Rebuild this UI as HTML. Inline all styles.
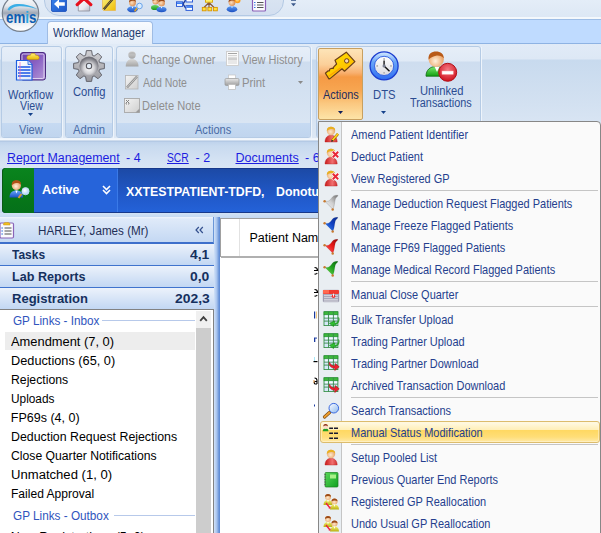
<!DOCTYPE html>
<html><head><meta charset="utf-8">
<style>
*{margin:0;padding:0;box-sizing:border-box}
html,body{width:601px;height:533px;overflow:hidden;background:#c8daef;font-family:"Liberation Sans",sans-serif;position:relative}
.a{position:absolute}
.t{position:absolute;white-space:nowrap;line-height:1}
svg{position:absolute;overflow:visible}
</style></head><body>

<div class="a" style="left:0px;top:0px;width:601px;height:19px;background:linear-gradient(#e4edf8,#dce7f4)"></div>
<div class="a" style="left:44px;top:-14px;width:240px;height:30px;border:1px solid #b3c9e4;border-radius:0 0 15px 15px;background:linear-gradient(#dde7f3,#d3dff0)"></div>
<div class="a" style="left:0px;top:19px;width:601px;height:25px;background:#bfdbff;border-top:1px solid #9dbde6;border-bottom:1px solid #8eb3e3"></div>
<div class="a" style="left:0px;top:17px;width:601px;height:2px;background:#f4f8fc"></div>
<div class="a" style="left:47px;top:21px;width:106px;height:24px;border:1px solid #9fbce4;border-bottom:none;border-radius:4px 4px 0 0;background:linear-gradient(#f9fbfe,#e4edf8)"></div>
<div class="t" style="left:53px;top:26.64px;font-size:12px;color:#1c3a6e;font-weight:400;transform:scaleX(0.92);transform-origin:0 0;">Workflow Manager</div>
<div class="a" style="left:0px;top:44px;width:601px;height:96px;background:linear-gradient(#e1ebf7 0,#dde8f5 15px,#c8daee 16px,#d3e1f1 60px,#dde8f5 95px)"></div>
<div class="a" style="left:62px;top:47px;width:1px;height:91px;background:#eef4fb"></div>
<div class="a" style="left:1px;top:46px;width:61px;height:92px;border:1px solid #b5cbe5;border-radius:3px;background:linear-gradient(#e6eef8 0,#e0eaf6 14px,#ceddef 15px,#d6e3f2 60px,#dce7f4 100%)"></div>
<div class="a" style="left:2px;top:123px;width:59px;height:14px;background:linear-gradient(#c6daf2,#c0d5ee);border-radius:0 0 2px 2px"></div>
<div class="a" style="left:113px;top:47px;width:1px;height:91px;background:#eef4fb"></div>
<div class="a" style="left:65px;top:46px;width:48px;height:92px;border:1px solid #b5cbe5;border-radius:3px;background:linear-gradient(#e6eef8 0,#e0eaf6 14px,#ceddef 15px,#d6e3f2 60px,#dce7f4 100%)"></div>
<div class="a" style="left:66px;top:123px;width:46px;height:14px;background:linear-gradient(#c6daf2,#c0d5ee);border-radius:0 0 2px 2px"></div>
<div class="a" style="left:311px;top:47px;width:1px;height:91px;background:#eef4fb"></div>
<div class="a" style="left:116px;top:46px;width:195px;height:92px;border:1px solid #b5cbe5;border-radius:3px;background:linear-gradient(#e6eef8 0,#e0eaf6 14px,#ceddef 15px,#d6e3f2 60px,#dce7f4 100%)"></div>
<div class="a" style="left:117px;top:123px;width:193px;height:14px;background:linear-gradient(#c6daf2,#c0d5ee);border-radius:0 0 2px 2px"></div>
<div class="a" style="left:481px;top:47px;width:1px;height:91px;background:#eef4fb"></div>
<div class="a" style="left:316px;top:46px;width:165px;height:92px;border:1px solid #b5cbe5;border-radius:3px;background:linear-gradient(#e6eef8 0,#e0eaf6 14px,#ceddef 15px,#d6e3f2 60px,#dce7f4 100%)"></div>
<div class="a" style="left:317px;top:123px;width:163px;height:14px;background:linear-gradient(#c6daf2,#c0d5ee);border-radius:0 0 2px 2px"></div>
<div class="t" style="left:19px;top:124.34px;font-size:12px;color:#4a6ca6;font-weight:400;transform:scaleX(0.92);transform-origin:0 0;">View</div>
<div class="t" style="left:73px;top:124.34px;font-size:12px;color:#4a6ca6;font-weight:400;transform:scaleX(0.94);transform-origin:0 0;">Admin</div>
<div class="t" style="left:195px;top:124.34px;font-size:12px;color:#4a6ca6;font-weight:400;transform:scaleX(0.92);transform-origin:0 0;">Actions</div>
<div class="t" style="left:8px;top:88.54px;font-size:12px;color:#2b4c91;font-weight:400;transform:scaleX(0.918);transform-origin:0 0;">Workflow</div>
<div class="t" style="left:20px;top:99.84px;font-size:12px;color:#2b4c91;font-weight:400;transform:scaleX(0.885);transform-origin:0 0;">View</div>
<svg style="left:28px;top:113px" width="6" height="3"><path d="M0 0H5L2.5 3Z" fill="#15428b"/></svg>
<div class="t" style="left:73.3px;top:85.84px;font-size:12px;color:#2b4c91;font-weight:400;transform:scaleX(0.933);transform-origin:0 0;">Config</div>
<div class="t" style="left:142px;top:54.14px;font-size:12px;color:#8f8f8f;font-weight:400;transform:scaleX(0.909);transform-origin:0 0;">Change Owner</div>
<div class="t" style="left:142.5px;top:77.14px;font-size:12px;color:#8f8f8f;font-weight:400;transform:scaleX(0.878);transform-origin:0 0;">Add Note</div>
<div class="t" style="left:142px;top:99.84px;font-size:12px;color:#8f8f8f;font-weight:400;transform:scaleX(0.924);transform-origin:0 0;">Delete Note</div>
<div class="t" style="left:242px;top:54.14px;font-size:12px;color:#8f8f8f;font-weight:400;transform:scaleX(0.912);transform-origin:0 0;">View History</div>
<div class="t" style="left:241.5px;top:77.14px;font-size:12px;color:#8f8f8f;font-weight:400;transform:scaleX(0.942);transform-origin:0 0;">Print</div>
<svg style="left:298px;top:81px" width="6" height="3"><path d="M0 0H5L2.5 3Z" fill="#8a8a8a"/></svg>
<div class="a" style="left:318px;top:48px;width:45px;height:72px;border:1px solid #c8a060;border-radius:2px;background:linear-gradient(#fde4b8 0,#fbd09a 22%,#f8b070 34%,#f59a45 40%,#f7a550 58%,#fbc880 78%,#fde4a8 100%)"></div>
<div class="t" style="left:323px;top:88.84px;font-size:12px;color:#1e2c5e;font-weight:400;transform:scaleX(0.908);transform-origin:0 0;">Actions</div>
<svg style="left:338px;top:111px" width="6" height="3"><path d="M0 0H5L2.5 3Z" fill="#0f1f5a"/></svg>
<div class="t" style="left:372.5px;top:88.84px;font-size:12px;color:#2b4c91;font-weight:400;transform:scaleX(0.939);transform-origin:0 0;">DTS</div>
<svg style="left:381px;top:111px" width="6" height="3"><path d="M0 0H5L2.5 3Z" fill="#15428b"/></svg>
<div class="t" style="left:420.3px;top:84.84px;font-size:12px;color:#2b4c91;font-weight:400;transform:scaleX(0.931);transform-origin:0 0;">Unlinked</div>
<div class="t" style="left:410px;top:97.04px;font-size:12px;color:#2b4c91;font-weight:400;transform:scaleX(0.904);transform-origin:0 0;">Transactions</div>
<div class="a" style="left:0px;top:138px;width:601px;height:30px;background:linear-gradient(#eef4fb 0,#f4f8fc 2px,#a9c0de 3px,#bfd3ec 4px,#c8daef 8px,#d4e2f3 22px,#d8e5f4 100%)"></div>
<div class="t" style="left:6.5px;top:152.02px;font-size:12.5px;color:#1c1ce0;font-weight:400;transform:scaleX(0.988);transform-origin:0 0;text-decoration:underline">Report Management</div>
<div class="t" style="left:126px;top:152.02px;font-size:12.5px;color:#1c1ce0;font-weight:400;">- 4</div>
<div class="t" style="left:167px;top:152.02px;font-size:12.5px;color:#1c1ce0;font-weight:400;transform:scaleX(0.824);transform-origin:0 0;text-decoration:underline">SCR</div>
<div class="t" style="left:195.5px;top:152.02px;font-size:12.5px;color:#1c1ce0;font-weight:400;">- 2</div>
<div class="t" style="left:235.5px;top:152.02px;font-size:12.5px;color:#1c1ce0;font-weight:400;text-decoration:underline">Documents</div>
<div class="t" style="left:305px;top:152.02px;font-size:12.5px;color:#1c1ce0;font-weight:400;">- 6</div>
<div class="a" style="left:2px;top:168px;width:599px;height:45px;background:#2664da;border-top:1px solid #1f4fb0;border-bottom:1px solid #17388a;border-radius:4px 0 0 4px"></div>
<div class="a" style="left:2px;top:168px;width:32px;height:45px;background:linear-gradient(#0a841e,#077a18 50%,#05701a);border-radius:4px 0 0 4px;box-shadow:inset 1px 0 0 #0a5a14"></div>
<div class="a" style="left:117px;top:169px;width:1px;height:43px;background:#3a7ae8"></div>
<div class="a" style="left:118px;top:168px;width:483px;height:45px;background:linear-gradient(#1c4aa6,#2058c8 60%,#2462d8);border-top:1px solid #17388a;border-bottom:1px solid #17388a"></div>
<div class="t" style="left:42px;top:183.72px;font-size:12.5px;color:#fff;font-weight:700;">Active</div>
<div class="t" style="left:125.5px;top:185.82px;font-size:12.5px;color:#fff;font-weight:700;transform:scaleX(0.986);transform-origin:0 0;">XXTESTPATIENT-TDFD,</div>
<div class="t" style="left:275.5px;top:185.82px;font-size:12.5px;color:#fff;font-weight:700;transform:scaleX(0.986);transform-origin:0 0;">Donotu</div>
<svg style="left:102px;top:185px" width="10" height="10"><path d="M1 1L4.5 4.5L8 1M1 5L4.5 8.5L8 5" stroke="#fff" stroke-width="1.6" fill="none"/></svg>
<div class="a" style="left:0px;top:213px;width:601px;height:320px;background:#c5d9f2"></div>
<div class="a" style="left:0px;top:213px;width:601px;height:4px;background:linear-gradient(#d2e2f5,#c6daf2)"></div>
<div class="a" style="left:0px;top:217px;width:214px;height:27px;background:linear-gradient(#f0f5fc 0,#dfeaf9 2px,#c4d8f3 100%);border-bottom:2px solid #3d6fcb;border-right:1px solid #6a96d8"></div>
<div class="t" style="left:38px;top:224.72px;font-size:12.5px;color:#1f2f57;font-weight:400;transform:scaleX(0.932);transform-origin:0 0;">HARLEY, James (Mr)</div>
<svg style="left:195px;top:226px" width="9" height="8"><path d="M3.8 1L1 4L3.8 7M7.8 1L5 4L7.8 7" stroke="#34508e" stroke-width="1.2" fill="none"/></svg>
<div class="a" style="left:0px;top:244px;width:214px;height:22px;background:linear-gradient(#ecf2fb,#c2d7f3);border-bottom:1px solid #3f73cd"></div>
<div class="t" style="left:12.2px;top:248.72px;font-size:12.5px;color:#15305e;font-weight:700;transform:scaleX(0.959);transform-origin:0 0;">Tasks</div>
<div class="t" style="left:190.3px;top:248.72px;font-size:12.5px;color:#15305e;font-weight:700;transform:scaleX(1.11);transform-origin:0 0;">4,1</div>
<div class="a" style="left:0px;top:266px;width:214px;height:22px;background:linear-gradient(#ecf2fb,#c2d7f3);border-bottom:1px solid #3f73cd"></div>
<div class="t" style="left:12.2px;top:270.72px;font-size:12.5px;color:#15305e;font-weight:700;transform:scaleX(1.008);transform-origin:0 0;">Lab Reports</div>
<div class="t" style="left:190.3px;top:270.72px;font-size:12.5px;color:#15305e;font-weight:700;transform:scaleX(1.11);transform-origin:0 0;">0,0</div>
<div class="a" style="left:0px;top:288px;width:214px;height:22px;background:linear-gradient(#ecf2fb,#c2d7f3);border-bottom:1px solid #3f73cd"></div>
<div class="t" style="left:12.2px;top:292.72px;font-size:12.5px;color:#15305e;font-weight:700;transform:scaleX(1.042);transform-origin:0 0;">Registration</div>
<div class="t" style="left:174.7px;top:292.72px;font-size:12.5px;color:#15305e;font-weight:700;transform:scaleX(1.11);transform-origin:0 0;">202,3</div>
<div class="a" style="left:0px;top:309px;width:214px;height:224px;background:#fff;border-top:1px solid #828282;border-right:1px solid #828282"></div>
<div class="a" style="left:196px;top:311px;width:15px;height:222px;background:#cdcdcd"></div>
<div class="a" style="left:196px;top:311px;width:15px;height:17px;background:#f0f0f0"></div>
<svg style="left:199px;top:315px" width="10" height="7"><path d="M1.2 5.8L4.5 2.2L7.8 5.8" stroke="#404040" stroke-width="1.8" fill="none"/></svg>
<div class="t" style="left:13px;top:315.14px;font-size:12px;color:#2f54bd;font-weight:400;transform:scaleX(0.977);transform-origin:0 0;">GP Links - Inbox</div>
<div class="a" style="left:102px;top:320px;width:93px;height:1px;background:#b7c9ea"></div>
<div class="a" style="left:5px;top:332px;width:190px;height:18px;background:#ededed"></div>
<div class="t" style="left:10.8px;top:335.62px;font-size:12.5px;color:#000;font-weight:400;transform:scaleX(1.03);transform-origin:0 0;">Amendment (7, 0)</div>
<div class="t" style="left:10.8px;top:354.62px;font-size:12.5px;color:#000;font-weight:400;transform:scaleX(1.02);transform-origin:0 0;">Deductions (65, 0)</div>
<div class="t" style="left:10.8px;top:373.62px;font-size:12.5px;color:#000;font-weight:400;transform:scaleX(0.979);transform-origin:0 0;">Rejections</div>
<div class="t" style="left:10.8px;top:392.62px;font-size:12.5px;color:#000;font-weight:400;transform:scaleX(0.948);transform-origin:0 0;">Uploads</div>
<div class="t" style="left:10.8px;top:411.62px;font-size:12.5px;color:#000;font-weight:400;transform:scaleX(1.0);transform-origin:0 0;">FP69s (4, 0)</div>
<div class="t" style="left:10.8px;top:430.62px;font-size:12.5px;color:#000;font-weight:400;transform:scaleX(0.988);transform-origin:0 0;">Deduction Request Rejections</div>
<div class="t" style="left:10.8px;top:449.62px;font-size:12.5px;color:#000;font-weight:400;transform:scaleX(0.975);transform-origin:0 0;">Close Quarter Notifications</div>
<div class="t" style="left:10.8px;top:468.62px;font-size:12.5px;color:#000;font-weight:400;transform:scaleX(1.047);transform-origin:0 0;">Unmatched (1, 0)</div>
<div class="t" style="left:10.8px;top:487.62px;font-size:12.5px;color:#000;font-weight:400;transform:scaleX(0.965);transform-origin:0 0;">Failed Approval</div>
<div class="t" style="left:13px;top:510.14px;font-size:12px;color:#2f54bd;font-weight:400;transform:scaleX(0.979);transform-origin:0 0;">GP Links - Outbox</div>
<div class="a" style="left:114px;top:515px;width:81px;height:1px;background:#b7c9ea"></div>
<div class="t" style="left:10.8px;top:530.92px;font-size:12.5px;color:#000;font-weight:400;transform:scaleX(1.0);transform-origin:0 0;">New Registrations (5, 0)</div>
<div class="a" style="left:214px;top:217px;width:6px;height:316px;background:linear-gradient(90deg,#d2e2f8,#a8c4ee 45%,#5d8ad4 90%,#7aa0e0)"></div>
<div class="a" style="left:220px;top:218px;width:381px;height:315px;background:#fff"></div>
<div class="a" style="left:220px;top:218px;width:381px;height:39px;border-left:1px solid #a0a0a0;border-top:1px solid #a0a0a0"></div>
<div class="a" style="left:221px;top:256px;width:380px;height:2px;background:#b0b0b0"></div>
<div class="a" style="left:239px;top:219px;width:1px;height:37px;background:#e2e2e2"></div>
<div class="t" style="left:249.5px;top:232.42px;font-size:12.5px;color:#000;font-weight:400;">Patient Nam</div>
<div class="a" style="left:318px;top:121px;width:283px;height:420px;background:#fafafa;border:1px solid #878787;border-radius:0 4px 0 0"></div>
<div class="a" style="left:319px;top:122px;width:23px;height:411px;background:#e9eef2;border-right:1px solid #c5c5c5"></div>
<div class="t" style="left:351px;top:128.67px;font-size:12.2px;color:#253f8e;font-weight:400;transform:scaleX(0.9);transform-origin:0 0;">Amend Patient Identifier</div>
<div class="t" style="left:351px;top:150.67px;font-size:12.2px;color:#253f8e;font-weight:400;transform:scaleX(0.9);transform-origin:0 0;">Deduct Patient</div>
<div class="t" style="left:351px;top:172.67px;font-size:12.2px;color:#253f8e;font-weight:400;transform:scaleX(0.9);transform-origin:0 0;">View Registered GP</div>
<div class="t" style="left:351px;top:197.67px;font-size:12.2px;color:#253f8e;font-weight:400;transform:scaleX(0.9);transform-origin:0 0;">Manage Deduction Request Flagged Patients</div>
<div class="t" style="left:351px;top:219.67px;font-size:12.2px;color:#253f8e;font-weight:400;transform:scaleX(0.9);transform-origin:0 0;">Manage Freeze Flagged Patients</div>
<div class="t" style="left:351px;top:241.67px;font-size:12.2px;color:#253f8e;font-weight:400;transform:scaleX(0.9);transform-origin:0 0;">Manage FP69 Flagged Patients</div>
<div class="t" style="left:351px;top:263.67px;font-size:12.2px;color:#253f8e;font-weight:400;transform:scaleX(0.9);transform-origin:0 0;">Manage Medical Record Flagged Patients</div>
<div class="t" style="left:351px;top:288.67px;font-size:12.2px;color:#253f8e;font-weight:400;transform:scaleX(0.9);transform-origin:0 0;">Manual Close Quarter</div>
<div class="t" style="left:351px;top:313.67px;font-size:12.2px;color:#253f8e;font-weight:400;transform:scaleX(0.9);transform-origin:0 0;">Bulk Transfer Upload</div>
<div class="t" style="left:351px;top:335.67px;font-size:12.2px;color:#253f8e;font-weight:400;transform:scaleX(0.9);transform-origin:0 0;">Trading Partner Upload</div>
<div class="t" style="left:351px;top:357.67px;font-size:12.2px;color:#253f8e;font-weight:400;transform:scaleX(0.9);transform-origin:0 0;">Trading Partner Download</div>
<div class="t" style="left:351px;top:379.67px;font-size:12.2px;color:#253f8e;font-weight:400;transform:scaleX(0.9);transform-origin:0 0;">Archived Transaction Download</div>
<div class="t" style="left:351px;top:404.67px;font-size:12.2px;color:#253f8e;font-weight:400;transform:scaleX(0.9);transform-origin:0 0;">Search Transactions</div>
<div class="a" style="left:320px;top:421px;width:280px;height:22px;border:1px solid #dcbc6c;border-radius:3px;background:linear-gradient(#fffae6 0,#ffefb8 38%,#ffd862 42%,#ffde78 75%,#ffe9a8 100%);box-shadow:inset 0 0 0 1px #fff6dc80"></div>
<div class="t" style="left:351px;top:426.67px;font-size:12.2px;color:#253f8e;font-weight:400;transform:scaleX(0.9);transform-origin:0 0;">Manual Status Modification</div>
<div class="t" style="left:351px;top:451.67px;font-size:12.2px;color:#253f8e;font-weight:400;transform:scaleX(0.9);transform-origin:0 0;">Setup Pooled List</div>
<div class="t" style="left:351px;top:473.67px;font-size:12.2px;color:#253f8e;font-weight:400;transform:scaleX(0.9);transform-origin:0 0;">Previous Quarter End Reports</div>
<div class="t" style="left:351px;top:495.67px;font-size:12.2px;color:#253f8e;font-weight:400;transform:scaleX(0.9);transform-origin:0 0;">Registered GP Reallocation</div>
<div class="t" style="left:351px;top:517.67px;font-size:12.2px;color:#253f8e;font-weight:400;transform:scaleX(0.9);transform-origin:0 0;">Undo Usual GP Reallocation</div>
<div class="a" style="left:351px;top:190px;width:247px;height:1px;background:#c5c5c5"></div>
<div class="a" style="left:351px;top:281px;width:247px;height:1px;background:#c5c5c5"></div>
<div class="a" style="left:351px;top:306px;width:247px;height:1px;background:#c5c5c5"></div>
<div class="a" style="left:351px;top:397px;width:247px;height:1px;background:#c5c5c5"></div>
<div class="a" style="left:351px;top:444px;width:247px;height:1px;background:#c5c5c5"></div>
<svg style="left:0;top:0" width="0" height="0"><defs>
<radialGradient id="mface" cx="0.45" cy="0.6" r="0.6"><stop offset="0" stop-color="#fde8cc"/><stop offset="1" stop-color="#e6a060"/></radialGradient>
<linearGradient id="mred" x1="0" y1="0" x2="1" y2="0"><stop offset="0" stop-color="#c81818"/><stop offset="0.6" stop-color="#f07070"/><stop offset="1" stop-color="#d03030"/></linearGradient>
<linearGradient id="pgray" x1="0" y1="1" x2="1" y2="0"><stop offset="0" stop-color="#f4f4f4"/><stop offset="0.5" stop-color="#d0d0d0"/><stop offset="1" stop-color="#707070"/></linearGradient>
<linearGradient id="pblue" x1="0" y1="1" x2="1" y2="0"><stop offset="0" stop-color="#3c8cf8"/><stop offset="0.55" stop-color="#1040c0"/><stop offset="1" stop-color="#0a2a8a"/></linearGradient>
<linearGradient id="pred" x1="0" y1="1" x2="1" y2="0"><stop offset="0" stop-color="#ff6a6a"/><stop offset="0.55" stop-color="#e81818"/><stop offset="1" stop-color="#900808"/></linearGradient>
<linearGradient id="pgrn" x1="0" y1="1" x2="1" y2="0"><stop offset="0" stop-color="#7ee850"/><stop offset="0.55" stop-color="#20a020"/><stop offset="1" stop-color="#0a6a0a"/></linearGradient>
<linearGradient id="mglass" x1="0" y1="0" x2="1" y2="1"><stop offset="0" stop-color="#ffffff"/><stop offset="1" stop-color="#8ab8f0"/></linearGradient>
<linearGradient id="mbook" x1="0" y1="0" x2="1" y2="1"><stop offset="0" stop-color="#5ad85a"/><stop offset="1" stop-color="#10a020"/></linearGradient>
<linearGradient id="myel" x1="0" y1="0" x2="0" y2="1"><stop offset="0" stop-color="#f4f070"/><stop offset="1" stop-color="#b8b010"/></linearGradient>
</defs></svg>
<svg style="left:322px;top:126.2px" width="18" height="18" viewBox="0 0 18 18"><path d="M3 16C3 11.8 5.5 9.2 9 9.2C12.5 9.2 15.2 11.8 15.2 16Z" fill="url(#mred)" stroke="#b82020" stroke-width="0.4"/>
<circle cx="9" cy="5" r="4.2" fill="url(#mface)"/>
<path d="M4.8 5C4.6 2 6.5 0.8 9 0.8C11.5 0.8 13.4 2.2 13.2 4.4C12 3.2 10.5 2.8 9 3C7.2 3.3 6 4 4.8 5Z" fill="#e8b020"/><path d="M16 7.8L10.2 14.6" stroke="#a06000" stroke-width="2.6"/><path d="M16 7.8L10.2 14.6" stroke="#ffd820" stroke-width="1.6"/><path d="M10.5 14.2L9.6 15.6" stroke="#222" stroke-width="1.4"/></svg>
<svg style="left:322px;top:148.2px" width="18" height="18" viewBox="0 0 18 18"><path d="M3 16C3 11.8 5.5 9.2 9 9.2C12.5 9.2 15.2 11.8 15.2 16Z" fill="url(#mred)" stroke="#b82020" stroke-width="0.4"/>
<circle cx="9" cy="5" r="4.2" fill="url(#mface)"/>
<path d="M4.8 5C4.6 2 6.5 0.8 9 0.8C11.5 0.8 13.4 2.2 13.2 4.4C12 3.2 10.5 2.8 9 3C7.2 3.3 6 4 4.8 5Z" fill="#e8b020"/><path d="M10.5 3.5L16.5 9.5M16.5 3.5L10.5 9.5" stroke="#fff" stroke-width="3.4"/><path d="M10.8 3.8L16.2 9.2M16.2 3.8L10.8 9.2" stroke="#e82838" stroke-width="2"/></svg>
<svg style="left:322px;top:170.2px" width="18" height="18" viewBox="0 0 18 18"><path d="M3 16C3 11.8 5.5 9.2 9 9.2C12.5 9.2 15.2 11.8 15.2 16Z" fill="url(#mred)" stroke="#b82020" stroke-width="0.4"/>
<circle cx="9" cy="5" r="4.2" fill="url(#mface)"/>
<path d="M4.8 5C4.6 2 6.5 0.8 9 0.8C11.5 0.8 13.4 2.2 13.2 4.4C12 3.2 10.5 2.8 9 3C7.2 3.3 6 4 4.8 5Z" fill="#e8b020"/><path d="M10.5 3.5L16.5 9.5M16.5 3.5L10.5 9.5" stroke="#fff" stroke-width="3.4"/><path d="M10.8 3.8L16.2 9.2M16.2 3.8L10.8 9.2" stroke="#e82838" stroke-width="2"/></svg>
<svg style="left:322px;top:195.2px" width="18" height="18" viewBox="0 0 18 18"><path d="M2.6 6C4.5 6.6 6.3 6.6 7.8 5.2C9.3 3.8 10.3 1.8 11.8 0.9C12.9 0.3 14.5 0.2 16 0.4C15.6 1.4 14.5 2 13.8 3C13 4.5 12.7 7 12.3 9.5C12 11.5 11.4 13.1 10.8 14.2Z" fill="url(#pgray)" stroke="#80808090" stroke-width="0.6"/><circle cx="2.6" cy="6.3" r="1.2" fill="#c87a30"/><circle cx="10.7" cy="14.4" r="1.25" fill="#c87a30"/></svg>
<svg style="left:322px;top:217.2px" width="18" height="18" viewBox="0 0 18 18"><path d="M2.6 6C4.5 6.6 6.3 6.6 7.8 5.2C9.3 3.8 10.3 1.8 11.8 0.9C12.9 0.3 14.5 0.2 16 0.4C15.6 1.4 14.5 2 13.8 3C13 4.5 12.7 7 12.3 9.5C12 11.5 11.4 13.1 10.8 14.2Z" fill="url(#pblue)" stroke="#00000030" stroke-width="0.4"/><circle cx="2.6" cy="6.3" r="1.2" fill="#c87a30"/><circle cx="10.7" cy="14.4" r="1.25" fill="#c87a30"/></svg>
<svg style="left:322px;top:239.2px" width="18" height="18" viewBox="0 0 18 18"><path d="M2.6 6C4.5 6.6 6.3 6.6 7.8 5.2C9.3 3.8 10.3 1.8 11.8 0.9C12.9 0.3 14.5 0.2 16 0.4C15.6 1.4 14.5 2 13.8 3C13 4.5 12.7 7 12.3 9.5C12 11.5 11.4 13.1 10.8 14.2Z" fill="url(#pred)" stroke="#00000030" stroke-width="0.4"/><circle cx="2.6" cy="6.3" r="1.2" fill="#c87a30"/><circle cx="10.7" cy="14.4" r="1.25" fill="#c87a30"/></svg>
<svg style="left:322px;top:261.2px" width="18" height="18" viewBox="0 0 18 18"><path d="M2.6 6C4.5 6.6 6.3 6.6 7.8 5.2C9.3 3.8 10.3 1.8 11.8 0.9C12.9 0.3 14.5 0.2 16 0.4C15.6 1.4 14.5 2 13.8 3C13 4.5 12.7 7 12.3 9.5C12 11.5 11.4 13.1 10.8 14.2Z" fill="url(#pgrn)" stroke="#00000030" stroke-width="0.4"/><circle cx="2.6" cy="6.3" r="1.2" fill="#c87a30"/><circle cx="10.7" cy="14.4" r="1.25" fill="#c87a30"/></svg>
<svg style="left:322px;top:286.2px" width="18" height="18" viewBox="0 0 18 18"><rect x="1" y="4" width="16" height="12" rx="1" fill="#9898ac" stroke="#b0b0c0" stroke-width="0.5"/><rect x="1" y="4" width="16" height="4" rx="1" fill="#f03a30"/><rect x="1" y="4" width="6" height="3.5" fill="#ff6a50"/><rect x="2.4" y="8.700000000000001" width="1.2" height="1.2" fill="#fff"/><rect x="2.4" y="10.700000000000001" width="1.2" height="1.2" fill="#fff"/><rect x="2.4" y="12.700000000000001" width="1.2" height="1.2" fill="#fff"/><rect x="2.4" y="14.4" width="1.2" height="1.2" fill="#fff"/><rect x="4.4" y="8.700000000000001" width="1.2" height="1.2" fill="#fff"/><rect x="4.4" y="10.700000000000001" width="1.2" height="1.2" fill="#fff"/><rect x="4.4" y="12.700000000000001" width="1.2" height="1.2" fill="#fff"/><rect x="4.4" y="14.4" width="1.2" height="1.2" fill="#fff"/><rect x="6.4" y="8.700000000000001" width="1.2" height="1.2" fill="#fff"/><rect x="6.4" y="10.700000000000001" width="1.2" height="1.2" fill="#fff"/><rect x="6.4" y="12.700000000000001" width="1.2" height="1.2" fill="#fff"/><rect x="6.4" y="14.4" width="1.2" height="1.2" fill="#fff"/><rect x="8.4" y="8.700000000000001" width="1.2" height="1.2" fill="#fff"/><rect x="8.4" y="10.700000000000001" width="1.2" height="1.2" fill="#fff"/><rect x="8.4" y="12.700000000000001" width="1.2" height="1.2" fill="#fff"/><rect x="8.4" y="14.4" width="1.2" height="1.2" fill="#fff"/><rect x="10.4" y="8.700000000000001" width="1.2" height="1.2" fill="#fff"/><rect x="10.4" y="10.700000000000001" width="1.2" height="1.2" fill="#fff"/><rect x="10.4" y="12.700000000000001" width="1.2" height="1.2" fill="#fff"/><rect x="10.4" y="14.4" width="1.2" height="1.2" fill="#fff"/><rect x="12.4" y="8.700000000000001" width="1.2" height="1.2" fill="#fff"/><rect x="12.4" y="10.700000000000001" width="1.2" height="1.2" fill="#fff"/><rect x="12.4" y="12.700000000000001" width="1.2" height="1.2" fill="#fff"/><rect x="12.4" y="14.4" width="1.2" height="1.2" fill="#fff"/><rect x="14.4" y="8.700000000000001" width="1.2" height="1.2" fill="#fff"/><rect x="14.4" y="10.700000000000001" width="1.2" height="1.2" fill="#fff"/><rect x="14.4" y="12.700000000000001" width="1.2" height="1.2" fill="#fff"/><rect x="14.4" y="14.4" width="1.2" height="1.2" fill="#fff"/><circle cx="11.5" cy="10.3" r="1.8" fill="#f03030"/><rect x="11.1" y="7.6" width="0.9" height="3" fill="#fff"/></svg>
<svg style="left:322px;top:311.2px" width="18" height="18" viewBox="0 0 18 18"><rect x="2" y="0.8" width="13.9" height="13.8" fill="#d6e8fa" stroke="#2a8a3a" stroke-width="0.8"/><rect x="2" y="0.8" width="13.9" height="3" fill="#3cb83c" stroke="#1e8a2a" stroke-width="0.6"/><path d="M6.5 0.8V14.6M11.4 0.8V14.6M2 7.1H15.9M2 10.1H15.9" stroke="#3a8a4a" stroke-width="0.9"/><rect x="3.2" y="4.5" width="2.4" height="1.8" fill="#f4faff"/><rect x="7.4" y="4.5" width="3.2" height="1.8" fill="#f4faff"/><rect x="12.2" y="4.5" width="2.8" height="1.8" fill="#f4faff"/><path d="M16.6 6.5C17.4 9.5 16 12 12.6 12.3V10L7.4 12.3L11.5 15.6V13.8C15.6 14 18 10.5 16.6 6.5Z" fill="#30c030" stroke="#108a10" stroke-width="0.6"/></svg>
<svg style="left:322px;top:333.2px" width="18" height="18" viewBox="0 0 18 18"><rect x="2" y="0.8" width="13.9" height="13.8" fill="#d6e8fa" stroke="#2a8a3a" stroke-width="0.8"/><rect x="2" y="0.8" width="13.9" height="3" fill="#3cb83c" stroke="#1e8a2a" stroke-width="0.6"/><path d="M6.5 0.8V14.6M11.4 0.8V14.6M2 7.1H15.9M2 10.1H15.9" stroke="#3a8a4a" stroke-width="0.9"/><rect x="3.2" y="4.5" width="2.4" height="1.8" fill="#f4faff"/><rect x="7.4" y="4.5" width="3.2" height="1.8" fill="#f4faff"/><rect x="12.2" y="4.5" width="2.8" height="1.8" fill="#f4faff"/><path d="M16.6 6.5C17.4 9.5 16 12 12.6 12.3V10L7.4 12.3L11.5 15.6V13.8C15.6 14 18 10.5 16.6 6.5Z" fill="#30c030" stroke="#108a10" stroke-width="0.6"/></svg>
<svg style="left:322px;top:355.2px" width="18" height="18" viewBox="0 0 18 18"><rect x="2" y="0.8" width="13.9" height="13.8" fill="#d6e8fa" stroke="#2a8a3a" stroke-width="0.8"/><rect x="2" y="0.8" width="13.9" height="3" fill="#3cb83c" stroke="#1e8a2a" stroke-width="0.6"/><path d="M6.5 0.8V14.6M11.4 0.8V14.6M2 7.1H15.9M2 10.1H15.9" stroke="#3a8a4a" stroke-width="0.9"/><rect x="3.2" y="4.5" width="2.4" height="1.8" fill="#f4faff"/><rect x="7.4" y="4.5" width="3.2" height="1.8" fill="#f4faff"/><rect x="12.2" y="4.5" width="2.8" height="1.8" fill="#f4faff"/><path d="M7.3 7.3C6.8 10.5 8.8 13 12.8 13.1V15.5L17.2 11.8L13.2 8.6V11C10.5 11.2 8.5 9.8 7.3 7.3Z" fill="#f02030" stroke="#b01018" stroke-width="0.6"/></svg>
<svg style="left:322px;top:377.2px" width="18" height="18" viewBox="0 0 18 18"><rect x="2" y="0.8" width="13.9" height="13.8" fill="#d6e8fa" stroke="#2a8a3a" stroke-width="0.8"/><rect x="2" y="0.8" width="13.9" height="3" fill="#3cb83c" stroke="#1e8a2a" stroke-width="0.6"/><path d="M6.5 0.8V14.6M11.4 0.8V14.6M2 7.1H15.9M2 10.1H15.9" stroke="#3a8a4a" stroke-width="0.9"/><rect x="3.2" y="4.5" width="2.4" height="1.8" fill="#f4faff"/><rect x="7.4" y="4.5" width="3.2" height="1.8" fill="#f4faff"/><rect x="12.2" y="4.5" width="2.8" height="1.8" fill="#f4faff"/><path d="M7.3 7.3C6.8 10.5 8.8 13 12.8 13.1V15.5L17.2 11.8L13.2 8.6V11C10.5 11.2 8.5 9.8 7.3 7.3Z" fill="#f02030" stroke="#b01018" stroke-width="0.6"/></svg>
<svg style="left:322px;top:402.2px" width="18" height="18" viewBox="0 0 18 18"><path d="M7.5 10.5L2.5 15" stroke="#7a4a10" stroke-width="3.2" stroke-linecap="round"/><path d="M7.5 10.5L2.5 15" stroke="#f0a030" stroke-width="1.8" stroke-linecap="round"/><circle cx="11.8" cy="6.2" r="4.8" fill="url(#mglass)" stroke="#3a6ae0" stroke-width="1"/></svg>
<svg style="left:321px;top:424.2px" width="18" height="18" viewBox="0 0 18 18"><path d="M1.8 7.2C1.8 5 3 4.2 4.6 4.2C6.2 4.2 7.4 5 7.4 7.2Z" fill="#22a022"/><circle cx="4.6" cy="2.7" r="2.2" fill="#f8dcc8"/><path d="M2.4 2.6C2.3 0.8 3.3 0.1 4.6 0.1C5.9 0.1 6.9 0.8 6.8 2.4C6 1.7 5.3 1.5 4.5 1.6C3.7 1.7 3 2 2.4 2.6Z" fill="#8a2a10"/><path d="M8.2 4.3H12M13 4.3H17M8.2 9.2H12M13 9.2H17M8.2 14.3H12M13 14.3H17" stroke="#1a1a30" stroke-width="1.4"/></svg>
<svg style="left:322px;top:449.2px" width="18" height="18" viewBox="0 0 18 18"><path d="M3 16C3 11.8 5.5 9.2 9 9.2C12.5 9.2 15.2 11.8 15.2 16Z" fill="url(#mred)" stroke="#b82020" stroke-width="0.4"/>
<circle cx="9" cy="5" r="4.2" fill="url(#mface)"/>
<path d="M4.8 5C4.6 2 6.5 0.8 9 0.8C11.5 0.8 13.4 2.2 13.2 4.4C12 3.2 10.5 2.8 9 3C7.2 3.3 6 4 4.8 5Z" fill="#e8b020"/></svg>
<svg style="left:322px;top:471.2px" width="18" height="18" viewBox="0 0 18 18"><rect x="3" y="1.5" width="13" height="14.5" rx="1" fill="url(#mbook)" stroke="#18801a" stroke-width="0.7"/><rect x="8" y="3.5" width="6" height="4" fill="#a8f088"/><path d="M2.5 3.5H4M2.5 6H4M2.5 8.5H4M2.5 11H4M2.5 13.5H4" stroke="#555" stroke-width="0.9"/></svg>
<svg style="left:322px;top:493.2px" width="18" height="18" viewBox="0 0 18 18"><circle cx="6" cy="4" r="3" fill="url(#mface)"/><path d="M3 4C3 1.8 4.4 1 6 1C7.6 1 9 1.8 9 3.8C8 3 7 2.8 6 2.9C5 3 4 3.3 3 4Z" fill="#9a4a18"/>
<path d="M1.5 12C1.5 8.6 3.5 7 6 7C8.5 7 10.5 8.6 10.5 12Z" fill="url(#myel)"/><path d="M5.2 7.1L6 9.5L6.8 7.1Z" fill="#fff"/>
<circle cx="12.5" cy="8.5" r="3" fill="url(#mface)"/><path d="M9.5 8.5C9.5 6.3 10.9 5.5 12.5 5.5C14.1 5.5 15.5 6.3 15.5 8.3C14.5 7.5 13.5 7.3 12.5 7.4C11.5 7.5 10.5 7.8 9.5 8.5Z" fill="#9a4a18"/>
<path d="M8 16.5C8 13.1 10 11.5 12.5 11.5C15 11.5 17 13.1 17 16.5Z" fill="url(#myel)"/><path d="M11.7 11.6L12.5 14L13.3 11.6Z" fill="#fff"/>
<path d="M4 10L8 15" stroke="#f02040" stroke-width="1.4"/><path d="M6.5 15.5L8.5 15.5L8.3 13.2Z" fill="#f02040"/></svg>
<svg style="left:322px;top:515.2px" width="18" height="18" viewBox="0 0 18 18"><circle cx="6" cy="4" r="3" fill="url(#mface)"/><path d="M3 4C3 1.8 4.4 1 6 1C7.6 1 9 1.8 9 3.8C8 3 7 2.8 6 2.9C5 3 4 3.3 3 4Z" fill="#9a4a18"/>
<path d="M1.5 12C1.5 8.6 3.5 7 6 7C8.5 7 10.5 8.6 10.5 12Z" fill="url(#myel)"/><path d="M5.2 7.1L6 9.5L6.8 7.1Z" fill="#fff"/>
<circle cx="12.5" cy="8.5" r="3" fill="url(#mface)"/><path d="M9.5 8.5C9.5 6.3 10.9 5.5 12.5 5.5C14.1 5.5 15.5 6.3 15.5 8.3C14.5 7.5 13.5 7.3 12.5 7.4C11.5 7.5 10.5 7.8 9.5 8.5Z" fill="#9a4a18"/>
<path d="M8 16.5C8 13.1 10 11.5 12.5 11.5C15 11.5 17 13.1 17 16.5Z" fill="url(#myel)"/><path d="M11.7 11.6L12.5 14L13.3 11.6Z" fill="#fff"/>
<path d="M4 10L8 15" stroke="#f02040" stroke-width="1.4"/><path d="M6.5 15.5L8.5 15.5L8.3 13.2Z" fill="#f02040"/></svg>
<!-- EMIS orb -->
<svg style="left:0;top:-7px" width="42" height="42" viewBox="0 0 42 42">
<defs>
<linearGradient id="orbg" x1="0" y1="0" x2="0" y2="1">
<stop offset="0" stop-color="#ffffff"/><stop offset="0.3" stop-color="#e6e9ee"/><stop offset="0.5" stop-color="#9ea7b5"/><stop offset="0.62" stop-color="#d4d9e0"/><stop offset="0.85" stop-color="#f6f7f9"/><stop offset="1" stop-color="#ffffff"/>
</linearGradient>
</defs>
<circle cx="20.5" cy="20.2" r="18.2" fill="url(#orbg)" stroke="#76808e" stroke-width="1.2"/>
<path d="M7.5 17C10 9.5 24 9 37.5 16.2C25 12 13 12 9.5 17.5Z" fill="#3aaee6"/>
<text x="6" y="29.5" font-family="Liberation Sans" font-weight="bold" font-size="16.5" fill="#0b5cb2" textLength="30.5" lengthAdjust="spacingAndGlyphs">em<tspan fill="#2aa6e0">i</tspan>s</text>
</svg>
<!-- QAT icons -->
<svg style="left:50px;top:-5px" width="18" height="18" viewBox="0 0 18 18">
<defs><linearGradient id="bkg" x1="0" y1="0" x2="1" y2="1"><stop offset="0" stop-color="#3c86ee"/><stop offset="1" stop-color="#1c56c8"/></linearGradient></defs>
<rect x="1.5" y="0.5" width="15" height="16" rx="1.5" fill="url(#bkg)" stroke="#2b5fc4" stroke-width="1"/>
<path d="M4 9L9 4.2V7.2H14.8V10.8H9V13.8Z" fill="#fff"/>
</svg>
<svg style="left:76px;top:-5px" width="18" height="18" viewBox="0 0 18 18">
<defs><linearGradient id="hmg" x1="0" y1="0" x2="1" y2="1"><stop offset="0" stop-color="#ffffff"/><stop offset="0.6" stop-color="#e8e8ee"/><stop offset="1" stop-color="#b8bac6"/></linearGradient></defs>
<path d="M2.3 9.5L8 4.5L13.7 9.5V16H2.3Z" fill="url(#hmg)" stroke="#8a8e9a" stroke-width="0.8"/>
<path d="M1.2 9.6L8 3.4L14.8 9.6" stroke="#e8101c" stroke-width="3.2" fill="none" stroke-linecap="round"/>
</svg>
<svg style="left:101px;top:-5px" width="16" height="17" viewBox="0 0 16 17">
<defs><linearGradient id="pyg" x1="0" y1="0" x2="1" y2="1"><stop offset="0" stop-color="#f7f07a"/><stop offset="1" stop-color="#f0be08"/></linearGradient></defs>
<path d="M1.5 2H14.5V15.5H2.5L1.5 14.5Z" fill="url(#pyg)" stroke="#e8b64a" stroke-width="0.7"/>
<path d="M12.5 3L2.8 14.2" stroke="#333" stroke-width="2.2"/>
<path d="M12.5 3L3.2 13.6" stroke="#c8a020" stroke-width="0.7"/>
<path d="M2.2 14.8L3.8 13.2L2 15.4Z" fill="#ddd"/>
</svg>
<svg style="left:126px;top:-5px" width="18" height="18" viewBox="0 0 18 18">
<defs><radialGradient id="uhead" cx="0.4" cy="0.5" r="0.6"><stop offset="0" stop-color="#fde0c0"/><stop offset="1" stop-color="#d9884a"/></radialGradient>
<linearGradient id="ubody" x1="0" y1="0" x2="0" y2="1"><stop offset="0" stop-color="#5a9bf4"/><stop offset="1" stop-color="#1d4fc0"/></linearGradient></defs>
<ellipse cx="6.5" cy="14.3" rx="5.3" ry="3" fill="url(#ubody)"/>
<path d="M5.6 11.6L6.5 13.4L7.4 11.6Z" fill="#fff"/>
<circle cx="6.5" cy="7.8" r="3.4" fill="url(#uhead)"/>
<path d="M3.1 7.4C3 4.6 4.6 3.8 6.5 3.8C8.6 3.8 10 4.8 9.8 7C9 5.8 7.6 5.6 6.2 5.8C5 6 4 6.6 3.1 7.4Z" fill="#9b4a18"/>
<path d="M11 13L8.6 16.4" stroke="#e3a020" stroke-width="1.6"/>
<circle cx="13.5" cy="11" r="2.8" fill="#d8ecff" stroke="#6aa4ea" stroke-width="1"/>
</svg>
<svg style="left:150px;top:-5px" width="18" height="18" viewBox="0 0 18 18">
<defs><linearGradient id="ugrn" x1="0" y1="0" x2="0" y2="1"><stop offset="0" stop-color="#6ed86a"/><stop offset="1" stop-color="#1a9a1a"/></linearGradient></defs>
<circle cx="5.5" cy="6.5" r="3" fill="url(#uhead)"/>
<path d="M2.5 6.2C2.6 3.9 4 3.2 5.6 3.2C7.3 3.3 8.4 4.2 8.4 6C7.6 5 6.5 4.9 5.3 5.1C4.3 5.2 3.3 5.6 2.5 6.2Z" fill="#9b4a18"/>
<ellipse cx="5" cy="12.5" rx="4" ry="2.6" fill="url(#ugrn)"/>
<ellipse cx="11.5" cy="14.5" rx="5" ry="2.8" fill="url(#ubody)"/>
<path d="M10.7 11.8L11.5 13.5L12.3 11.8Z" fill="#fff"/>
<circle cx="11.6" cy="8" r="3.3" fill="url(#uhead)"/>
<path d="M8.3 7.6C8.3 4.9 9.8 4.1 11.6 4.1C13.6 4.1 15 5 14.8 7.2C14 6.1 12.6 5.9 11.3 6.1C10.1 6.3 9.2 6.8 8.3 7.6Z" fill="#9b4a18"/>
</svg>
<svg style="left:175px;top:-5px" width="19" height="18" viewBox="0 0 19 18">
<path d="M7.5 9C9 9 9.5 5 11.5 4.8M7.5 9C9 9 9.5 13 11.5 13.2" stroke="#1d3a9a" stroke-width="1.4" fill="none"/>
<rect x="1.5" y="6.8" width="6" height="4.6" fill="#fff" stroke="#2f5fd8" stroke-width="1"/>
<rect x="2" y="7.3" width="5" height="1.8" fill="#3c7ef0"/>
<rect x="11" y="2.6" width="6.5" height="4.4" fill="#fff" stroke="#2f5fd8" stroke-width="1"/>
<rect x="11.5" y="3.1" width="5.5" height="1.6" fill="#cfe0fb"/>
<rect x="11" y="10.6" width="6.5" height="4.8" fill="#fff" stroke="#2f5fd8" stroke-width="1"/>
<rect x="11.5" y="11.1" width="5.5" height="1.8" fill="#3c7ef0"/>
</svg>
<svg style="left:201px;top:-5px" width="18" height="18" viewBox="0 0 18 18">
<path d="M8 7.5L3 12.5M8 7.5V12.5M8 7.5L13 12.5" stroke="#8a5a3a" stroke-width="1.2" fill="none"/>
<rect x="4.5" y="3.6" width="7" height="3.6" fill="#fff36a" stroke="#d9a300" stroke-width="0.9"/>
<rect x="1.3" y="12.4" width="3.8" height="3.4" fill="#ffe23a" stroke="#d99500" stroke-width="0.9"/>
<rect x="6.9" y="12.4" width="3.8" height="3.4" fill="#ffe23a" stroke="#d99500" stroke-width="0.9"/>
<rect x="12.5" y="12.4" width="3.8" height="3.4" fill="#ffe23a" stroke="#d99500" stroke-width="0.9"/>
</svg>
<svg style="left:225px;top:-5px" width="18" height="18" viewBox="0 0 18 18">
<ellipse cx="7" cy="14.2" rx="5.3" ry="3" fill="url(#ubody)"/>
<path d="M6.2 11.5L7 13.2L7.8 11.5Z" fill="#fff"/>
<circle cx="7" cy="7.6" r="3.4" fill="url(#uhead)"/>
<path d="M3.6 7.2C3.5 4.5 5.1 3.6 7 3.6C9.1 3.6 10.5 4.6 10.3 6.8C9.5 5.6 8.1 5.4 6.7 5.6C5.5 5.8 4.5 6.4 3.6 7.2Z" fill="#9b4a18"/>
<circle cx="12.5" cy="5.2" r="3" fill="#ffa020"/>
<circle cx="12.3" cy="5" r="1.6" fill="#ffd070"/>
</svg>
<svg style="left:251px;top:-5px" width="16" height="18" viewBox="0 0 16 18">
<rect x="1.5" y="1.5" width="13" height="14.5" rx="1" fill="#fbfbfd" stroke="#8a5fb8" stroke-width="1.2"/>
<path d="M5.5 1.5H10.5V4H5.5Z" fill="#e0a010"/>
<path d="M6 7.5H12.5M6 10H12.5M6 12.5H12.5" stroke="#555" stroke-width="1"/>
<path d="M3 7.5H4.5M3 10H4.5M3 12.5H4.5" stroke="#3a78e0" stroke-width="1"/>
</svg>
<svg style="left:290px;top:0" width="8" height="8" viewBox="0 0 8 8">
<rect x="1" y="-1" width="5" height="1.8" fill="#3d5a8c"/>
<path d="M1 3.2H6L3.5 6.2Z" fill="#3d5a8c"/>
</svg>
<!-- Workflow View clipboard -->
<svg style="left:14px;top:50px" width="34" height="34" viewBox="0 0 34 34">
<defs>
<linearGradient id="clipg" x1="0" y1="0" x2="1" y2="1"><stop offset="0" stop-color="#6a3fa8"/><stop offset="0.5" stop-color="#8a62c4"/><stop offset="1" stop-color="#b59ad8"/></linearGradient>
<linearGradient id="clipy" x1="0" y1="0" x2="0" y2="1"><stop offset="0" stop-color="#fff07a"/><stop offset="1" stop-color="#e8b800"/></linearGradient>
<linearGradient id="docg" x1="0" y1="0" x2="1" y2="1"><stop offset="0" stop-color="#ffffff"/><stop offset="1" stop-color="#dfe8f8"/></linearGradient>
</defs>
<rect x="6.5" y="2.5" width="25" height="27.5" rx="2.5" fill="url(#clipg)" stroke="#4a2a80" stroke-width="1"/>
<rect x="8" y="4" width="22" height="24.5" rx="1.5" fill="none" stroke="#e8def6" stroke-width="1" opacity="0.85"/>
<path d="M12.8 7.8C12.8 5.6 14.6 5.3 16.3 5.3L17.3 3.4H20.7L21.7 5.3C23.4 5.3 25.2 5.6 25.2 7.8C25.2 9.3 23.8 9.6 22.2 9.6H15.8C14.2 9.6 12.8 9.3 12.8 7.8Z" fill="url(#clipy)" stroke="#c89600" stroke-width="0.6"/>
<path d="M2.5 10.5H14L18 14.5V30H2.5Z" fill="url(#docg)" stroke="#1f5fe0" stroke-width="1.2"/>
<path d="M14 10.5V14.5H18" fill="#c8d8f4" stroke="#1f5fe0" stroke-width="0.8"/>
<path d="M4 17H16.5M4 20H16.5M4 23H16.5M4 26H16.5" stroke="#1a56e6" stroke-width="1.3"/>
<path d="M6 12V29.5" stroke="#f070c0" stroke-width="0.8"/>
</svg>
<!-- Config gear -->
<svg style="left:72px;top:50px" width="34" height="34" viewBox="0 0 34 34">
<defs>
<radialGradient id="gearg" cx="0.5" cy="0.62" r="0.55"><stop offset="0" stop-color="#ffffff"/><stop offset="0.5" stop-color="#d4d4d8"/><stop offset="1" stop-color="#707078"/></radialGradient>
<linearGradient id="gearo" x1="0" y1="0" x2="0" y2="1"><stop offset="0" stop-color="#d0d0d4"/><stop offset="1" stop-color="#9a9aa0"/></linearGradient>
</defs>
<g transform="translate(17 16)">
<path d="M-3.40 -10.67L-2.60 -15.38L2.60 -15.38L3.40 -10.67L5.14 -9.95L9.04 -12.72L12.72 -9.04L9.95 -5.14L10.67 -3.40L15.38 -2.60L15.38 2.60L10.67 3.40L9.95 5.14L12.72 9.04L9.04 12.72L5.14 9.95L3.40 10.67L2.60 15.38L-2.60 15.38L-3.40 10.67L-5.14 9.95L-9.04 12.72L-12.72 9.04L-9.95 5.14L-10.67 3.40L-15.38 2.60L-15.38 -2.60L-10.67 -3.40L-9.95 -5.14L-12.72 -9.04L-9.04 -12.72L-5.14 -9.95Z" fill="url(#gearo)" stroke="#5a5a62" stroke-width="0.9" stroke-linejoin="round"/>
<circle r="9.6" fill="url(#gearg)"/>
<circle r="3.2" fill="#55555c"/>
<circle r="2.2" fill="#e4eef8"/>
</g>
</svg>
<!-- disabled small icons -->
<svg style="left:124px;top:50px" width="16" height="18" viewBox="0 0 16 18">
<defs><linearGradient id="dgr" x1="0" y1="0" x2="0" y2="1"><stop offset="0" stop-color="#d8d8d8"/><stop offset="1" stop-color="#a4a4a4"/></linearGradient></defs>
<path d="M1.7 16.5C1.7 11.5 4.5 9 8 9C11.5 9 14.5 11.5 14.5 16.5Z" fill="url(#dgr)"/>
<circle cx="8" cy="5" r="3.7" fill="url(#dgr)"/>
<path d="M4.5 4.6C5 2.5 7 1.6 9 2C10.6 2.4 11.5 3.6 11.6 4.8C10 3.9 6.5 4 4.5 4.6Z" fill="#b9b9b9"/>
</svg>
<svg style="left:124px;top:74px" width="16" height="17" viewBox="0 0 16 17">
<defs><linearGradient id="dsq" x1="0" y1="0" x2="1" y2="1"><stop offset="0" stop-color="#f4f4f4"/><stop offset="1" stop-color="#cfcfcf"/></linearGradient></defs>
<rect x="1.5" y="1.5" width="12.5" height="13.5" fill="url(#dsq)" stroke="#b4b4b4" stroke-width="0.8"/>
<path d="M13 2.5L3 13.5" stroke="#8d8d8d" stroke-width="2.4"/>
<path d="M13 2.5L3 13.5" stroke="#d9d9d9" stroke-width="0.8"/>
<path d="M1.5 15L3.5 12.5L2 14.5Z" fill="#888"/>
</svg>
<svg style="left:123px;top:97px" width="18" height="17" viewBox="0 0 18 17">
<rect x="1.5" y="1.5" width="15" height="14" fill="url(#dsq)" stroke="#a8a8a8" stroke-width="0.9"/>
<path d="M12.5 15.5L16.5 11.5V15.5Z" fill="#9a9a9a"/>
<path d="M3 3L6 6M6 3L3 6M3.5 5.5C2.5 6.5 3 7.5 4 7M5.5 5.5C6.5 6.5 6 7.5 5 7" stroke="#7a7a7a" stroke-width="0.9" fill="none"/>
</svg>
<svg style="left:225px;top:50px" width="15" height="17" viewBox="0 0 15 17">
<rect x="1.5" y="1.5" width="12" height="14" fill="#fbfbfb" stroke="#cdcdcd" stroke-width="0.9"/>
<path d="M3 3.5H12M3 9H12" stroke="#9a9a9a" stroke-width="0.9"/>
<path d="M3 5.5H12M3 7.3H12M3 11H12M3 13H12" stroke="#c6c6c6" stroke-width="0.7"/>
</svg>
<svg style="left:224px;top:74px" width="16" height="17" viewBox="0 0 16 17">
<defs><linearGradient id="prg" x1="0" y1="0" x2="0" y2="1"><stop offset="0" stop-color="#e8e8e8"/><stop offset="1" stop-color="#9c9c9c"/></linearGradient></defs>
<rect x="4.5" y="1" width="7" height="4" fill="#fff" stroke="#c4c4c4" stroke-width="0.7"/>
<rect x="1" y="4.5" width="14" height="7" rx="1.2" fill="url(#prg)" stroke="#9a9a9a" stroke-width="0.7"/>
<rect x="4.5" y="10.5" width="7" height="5" fill="#fff" stroke="#b8b8b8" stroke-width="0.7"/>
</svg>
<!-- key -->
<svg style="left:322px;top:50px" width="36" height="32" viewBox="0 0 36 32">
<defs><linearGradient id="keyg" x1="0" y1="0" x2="1" y2="1"><stop offset="0" stop-color="#fff8a0"/><stop offset="0.35" stop-color="#ffd400"/><stop offset="0.7" stop-color="#ffc000"/><stop offset="1" stop-color="#f09000"/></linearGradient></defs>
<path d="M13 10.3L24.3 2.2L32.9 11.6L22.5 21.2L20 18.8L8 28.6L6.9 28.9L3.4 23.3L6.2 20.8L7.4 21L7.8 19L10.6 18.2L11.2 18.5L11.8 16.8L14.6 14Z" fill="url(#keyg)" stroke="#6a3e18" stroke-width="1.2" stroke-linejoin="round"/>
<circle cx="24.7" cy="10.9" r="2.2" fill="#f8d8b8" stroke="#6a3e18" stroke-width="1"/>
<path d="M6.5 26.5L19 17.5" stroke="#ff9000" stroke-width="1.2" opacity="0.7"/>
</svg>
<!-- clock -->
<svg style="left:368px;top:50px" width="32" height="32" viewBox="0 0 32 32">
<defs>
<linearGradient id="ringg" x1="0" y1="0" x2="0" y2="1"><stop offset="0" stop-color="#d8ecff"/><stop offset="0.35" stop-color="#6aa6f8"/><stop offset="1" stop-color="#2e6df0"/></linearGradient>
<linearGradient id="faceg" x1="0" y1="0" x2="0" y2="1"><stop offset="0" stop-color="#ffffff"/><stop offset="1" stop-color="#dcdce0"/></linearGradient>
</defs>
<circle cx="16.1" cy="15.9" r="14" fill="url(#ringg)" stroke="#1a3ccf" stroke-width="1.3"/>
<circle cx="16.1" cy="15.9" r="9.6" fill="url(#faceg)" stroke="#2a5ae0" stroke-width="0.9"/>
<circle cx="16.1" cy="9" r="0.9" fill="#aaa"/><circle cx="16.1" cy="22.8" r="0.9" fill="#aaa"/>
<circle cx="9.2" cy="15.9" r="0.9" fill="#aaa"/><circle cx="23" cy="15.9" r="0.9" fill="#aaa"/>
<path d="M16.1 15.9V10.5" stroke="#333" stroke-width="1.6"/>
<path d="M16.1 15.9L21.5 21.3" stroke="#111" stroke-width="1.4"/>
<circle cx="16.1" cy="15.9" r="1.6" fill="#7a7f90"/>
</svg>
<!-- unlinked -->
<svg style="left:422px;top:48px" width="36" height="36" viewBox="0 0 36 36">
<defs>
<radialGradient id="face2" cx="0.45" cy="0.6" r="0.6"><stop offset="0" stop-color="#fff1dc"/><stop offset="1" stop-color="#e89a5a"/></radialGradient>
<linearGradient id="grn2" x1="0" y1="0" x2="0" y2="1"><stop offset="0" stop-color="#7ee870"/><stop offset="1" stop-color="#10a010"/></linearGradient>
<radialGradient id="redg" cx="0.5" cy="0.35" r="0.65"><stop offset="0" stop-color="#f47a84"/><stop offset="1" stop-color="#d0101c"/></radialGradient>
</defs>
<path d="M4 28.2C4 22 8 18.5 14 18.5C20 18.5 22 22 22 28.2Z" fill="url(#grn2)" stroke="#0e6a10" stroke-width="0.8"/>
<path d="M12.5 18.5L15 24L17.5 18.5Z" fill="#fff"/>
<circle cx="14.2" cy="11.5" r="7.6" fill="url(#face2)"/>
<path d="M6.6 11.4C6 5.5 9.8 3.5 14 3.5C18.5 3.5 22 6 21.8 10.5C20 8 17 7.3 14 7.7C11.5 8 9 9.5 6.6 11.4Z" fill="#b85a18"/>
<circle cx="25.7" cy="24.3" r="9" fill="url(#redg)" stroke="#b01018" stroke-width="1"/>
<rect x="20" y="23" width="11.2" height="3.3" fill="#fff" stroke="#ffb0b0" stroke-width="0.5"/>
</svg>
<!-- patient bar person icon -->
<svg style="left:7px;top:177px" width="24" height="24" viewBox="0 0 24 24">
<defs>
<radialGradient id="pface" cx="0.45" cy="0.6" r="0.6"><stop offset="0" stop-color="#fff0dc"/><stop offset="1" stop-color="#e0945a"/></radialGradient>
<linearGradient id="pbody" x1="0" y1="0" x2="0" y2="1"><stop offset="0" stop-color="#6aa8f8"/><stop offset="1" stop-color="#1a50c8"/></linearGradient>
<radialGradient id="pglass" cx="0.4" cy="0.4" r="0.6"><stop offset="0" stop-color="#ffffff"/><stop offset="1" stop-color="#a8d0f8"/></radialGradient>
</defs>
<path d="M2.5 20.5C2.5 16 5 13.5 9.5 13.5C14 13.5 16 16 16 20.5Z" fill="url(#pbody)"/>
<path d="M8.3 13.6L9.5 16.5L10.7 13.6Z" fill="#fff"/>
<circle cx="9.4" cy="8.4" r="4.6" fill="url(#pface)"/>
<path d="M4.8 8.2C4.5 4.5 6.8 3.2 9.4 3.2C12.2 3.2 14.3 4.5 14 7.6C12.8 6.2 11 5.8 9.2 6C7.5 6.2 6 7 4.8 8.2Z" fill="#b05018"/>
<path d="M14.5 17L11.5 21" stroke="#d89a30" stroke-width="2"/>
<circle cx="18.5" cy="14.2" r="3.6" fill="url(#pglass)" stroke="#c8e0f8" stroke-width="0.8"/>
</svg>
<!-- left header clipboard -->
<svg style="left:-1px;top:221px" width="16" height="18" viewBox="0 0 16 18">
<rect x="1" y="2" width="13.5" height="15" rx="1.2" fill="#fbfbfd" stroke="#8a64b8" stroke-width="1.2"/>
<path d="M4.5 3.2C4.5 1.8 6 1.5 7.5 1.5H8C9.5 1.5 11 1.8 11 3.2V4H4.5Z" fill="#f0c020" stroke="#c89010" stroke-width="0.5"/>
<path d="M5.5 7H12.5M5.5 10H12.5M5.5 13H12.5" stroke="#505050" stroke-width="1.1"/>
<path d="M2.3 7H4M2.3 10H4M2.3 13H4" stroke="#3a78e0" stroke-width="1.1"/>
</svg>
<!-- partial letters at grid edge -->
<svg style="left:312px;top:264px" width="7" height="150" viewBox="0 0 7 150">
<path d="M2.5 3.5C4.5 3.5 5.5 4.5 5.5 6.5H2M5.3 9C4.5 10 3.5 10.2 2.5 10" stroke="#000" stroke-width="1.2" fill="none"/>
<path d="M2.5 25.5C4.5 25.5 5.5 26.5 5.5 28.5H2M5.3 31C4.5 32 3.5 32.2 2.5 32" stroke="#000" stroke-width="1.2" fill="none"/>
<rect x="2" y="47.5" width="1.2" height="7" fill="#1a3a9a"/><rect x="4" y="47.5" width="1" height="7" fill="#f0c880"/>
<rect x="2" y="73.5" width="1.3" height="4.5" fill="#1a3aa0"/><rect x="3.3" y="73.5" width="1.5" height="1.2" fill="#1a3aa0"/>
<rect x="2" y="93" width="1" height="4" fill="#a8e8f8"/><rect x="1.5" y="97" width="4" height="1.2" fill="#000"/>
<path d="M2.5 114C4.5 114 5 115 5 116.5V120M5 117.5H3C2 117.5 2 120 3 120H5" stroke="#000" stroke-width="1.1" fill="none"/><rect x="1.5" y="116" width="1" height="3" fill="#e09040"/>
<rect x="2" y="140.5" width="1" height="2" fill="#1a3aa0"/>
</svg>

</body></html>
